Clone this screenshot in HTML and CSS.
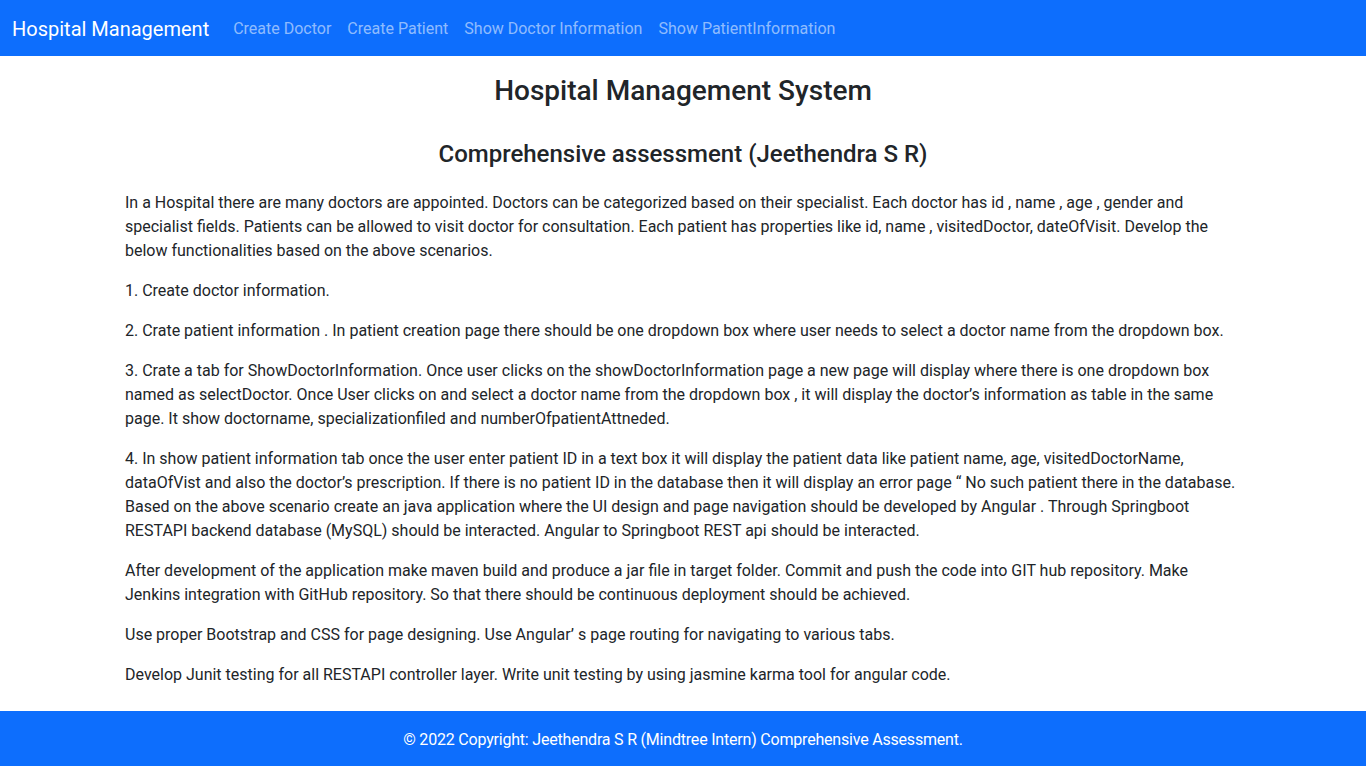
FILE: index.html
```html
<!DOCTYPE html>
<html lang="en">
<head>
<meta charset="utf-8">
<title>Hospital Management</title>
<link rel="stylesheet" href="styles.css">
</head>
<body>
<nav class="navbar">
  <a class="brand" href="#">Hospital Management</a>
  <ul class="nav">
    <li><a class="nav-link" href="#">Create Doctor</a></li>
    <li><a class="nav-link" href="#">Create Patient</a></li>
    <li><a class="nav-link" href="#">Show Doctor Information</a></li>
    <li><a class="nav-link" href="#">Show PatientInformation</a></li>
  </ul>
</nav>
<main class="container">
  <h3 class="title">Hospital Management System</h3>
  <h4 class="subtitle">Comprehensive assessment (Jeethendra S R)</h4>
  <p>In a Hospital there are many doctors are appointed. Doctors can be categorized based on their specialist. Each doctor has id , name , age , gender and specialist fields. Patients can be allowed to visit doctor for consultation. Each patient has properties like id, name , visitedDoctor, dateOfVisit. Develop the below functionalities based on the above scenarios.</p>
  <p>1. Create doctor information.</p>
  <p>2. Crate patient information . In patient creation page there should be one dropdown box where user needs to select a doctor name from the dropdown box.</p>
  <p>3. Crate a tab for ShowDoctorInformation. Once user clicks on the showDoctorInformation page a new page will display where there is one dropdown box named as selectDoctor. Once User clicks on and select a doctor name from the dropdown box , it will display the doctor’s information as table in the same page. It show doctorname, specializationfiled and numberOfpatientAttneded.</p>
  <p>4. In show patient information tab once the user enter patient ID in a text box it will display the patient data like patient name, age, visitedDoctorName, dataOfVist and also the doctor’s prescription. If there is no patient ID in the database then it will display an error page “ No such patient there in the database. Based on the above scenario create an java application where the UI design and page navigation should be developed by Angular . Through Springboot RESTAPI backend database (MySQL) should be interacted. Angular to Springboot REST api should be interacted.</p>
  <p>After development of the application make maven build and produce a jar file in target folder. Commit and push the code into GIT hub repository. Make Jenkins integration with GitHub repository. So that there should be continuous deployment should be achieved.</p>
  <p>Use proper Bootstrap and CSS for page designing. Use Angular’ s page routing for navigating to various tabs.</p>
  <p>Develop Junit testing for all RESTAPI controller layer. Write unit testing by using jasmine karma tool for angular code.</p>
</main>
<footer class="footer">© 2022 Copyright: Jeethendra S R (Mindtree Intern) Comprehensive Assessment.</footer>
</body>
</html>
```
FILE: styles.css
```css
*{box-sizing:border-box;}
html,body{margin:0;padding:0;}
body{
  font-family:Roboto,"Liberation Sans",sans-serif;
  font-size:16px;
  line-height:24px;
  color:#212529;
  background:#fff;
}
a{text-decoration:none;}
.navbar{
  display:flex;
  align-items:center;
  height:56px;
  padding:2px 12px 0;
  background:#0d6efd;
}
.brand{
  font-size:20px;
  line-height:30px;
  color:#fff;
  margin-right:16px;
}
.nav{
  display:flex;
  list-style:none;
  margin:0;
  padding:0;
}
.nav-link{
  display:block;
  padding:8px;
  color:rgba(255,255,255,.55);
}
.container{
  max-width:1140px;
  margin:0 auto;
  padding:18px 12px 8px;
}
.title{
  margin:0 0 32px;
  font-size:28px;
  line-height:33.6px;
  font-weight:500;
  text-align:center;
}
.subtitle{
  margin:0 0 23px;
  font-size:24px;
  line-height:28.8px;
  font-weight:500;
  text-align:center;
}
p{margin:0 0 16px;}
.footer{
  background:#0d6efd;
  color:#fff;
  text-align:center;
  padding:17px 16px 15px;
  letter-spacing:-0.2px;
}
```
